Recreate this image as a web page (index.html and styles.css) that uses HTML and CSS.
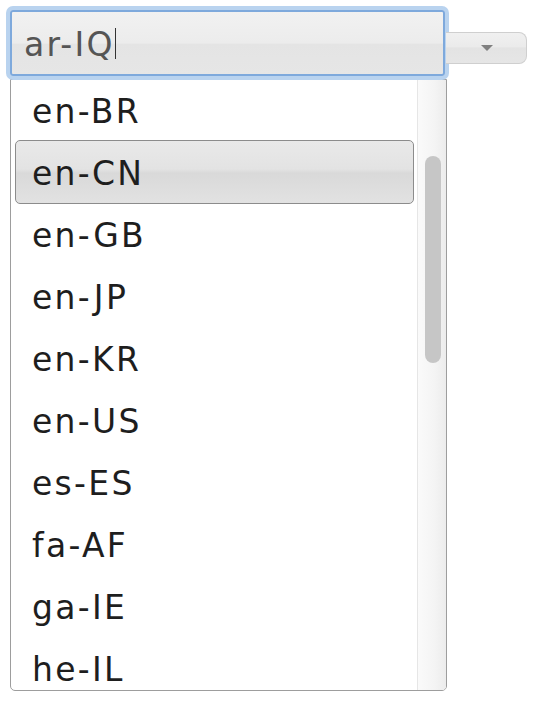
FILE: index.html
```html
<!DOCTYPE html>
<html>
<head>
<meta charset="utf-8">
<link rel="stylesheet" href="styles.css">
</head>
<body>
<div class="combo">
  <div class="row">
    <div class="input"><span class="value">ar-IQ</span><span class="caret"></span></div>
    <div class="button"><span class="arrow"></span></div>
  </div>
  <div class="dropdown">
    <ul class="list">
      <li class="item">en-BR</li>
      <li class="item selected">en-CN</li>
      <li class="item">en-GB</li>
      <li class="item">en-JP</li>
      <li class="item">en-KR</li>
      <li class="item">en-US</li>
      <li class="item">es-ES</li>
      <li class="item">fa-AF</li>
      <li class="item">ga-IE</li>
      <li class="item">he-IL</li>
    </ul>
    <div class="scrollbar"><div class="thumb"></div></div>
  </div>
</div>
</body>
</html>
```
FILE: styles.css
```css
html, body {
  margin: 0;
  padding: 0;
  background: #fff;
}
body {
  padding: 10px;
  font-family: "DejaVu Sans", Verdana, sans-serif;
}
.combo {
  width: 517px;
}
.row {
  display: flex;
  align-items: flex-start;
  position: relative;
  z-index: 2;
}
.input {
  box-sizing: border-box;
  width: 436px;
  height: 66px;
  border: 2px solid #7ea9dc;
  border-radius: 3px;
  box-shadow: 0 0 0 4px #b9d3ef;
  background: linear-gradient(#f1f1f1 0%, #ececec 50%, #e4e4e4 52%, #e6e6e6 100%);
  display: flex;
  align-items: center;
  padding-left: 12px;
  padding-top: 3px;
  font-size: 33px;
  color: #555;
  letter-spacing: 2.3px;
}
.caret {
  display: inline-block;
  width: 1.5px;
  height: 31px;
  background: #333;
  margin-left: 0;
  margin-top: -2px;
}
.button {
  box-sizing: border-box;
  width: 81px;
  height: 32px;
  margin-left: 1px;
  margin-top: 22px;
  border: 1px solid #cfcfcf;
  border-left: none;
  border-radius: 0 8px 8px 0;
  background: linear-gradient(#f0f0f0 0%, #ebebeb 45%, #e3e3e3 50%, #e6e6e6 100%);
  display: flex;
  align-items: center;
  justify-content: center;
}
.arrow {
  width: 0;
  height: 0;
  border-left: 6px solid transparent;
  border-right: 6px solid transparent;
  border-top: 6px solid #808080;
  margin-left: 2px;
}
.dropdown {
  box-sizing: border-box;
  width: 437px;
  height: 612px;
  margin-top: 3px;
  border: 1px solid #9d9d9d;
  border-radius: 0 0 5px 5px;
  display: flex;
  overflow: hidden;
  background: #fff;
  position: relative;
  z-index: 1;
}
.list {
  list-style: none;
  margin: -1px 0 0 0;
  padding: 0 3px 0 4px;
  flex: 1;
}
.item {
  box-sizing: border-box;
  height: 62px;
  display: flex;
  align-items: center;
  padding-left: 17px;
  padding-top: 3px;
  font-size: 33px;
  color: #1e1e1e;
  letter-spacing: 2.3px;
}
.item.selected {
  height: 64px;
  margin: -1px 0;
  padding-left: 16px;
  border: 1px solid #8c8c8c;
  border-radius: 5px;
  background: linear-gradient(#e9e9e9 0%, #e3e3e3 45%, #d9d9d9 52%, #e2e2e2 100%);
}
.scrollbar {
  box-sizing: border-box;
  width: 29px;
  border-left: 1px solid #e6e6e6;
  background: linear-gradient(90deg, #fafafa 0%, #f4f4f4 60%, #ececec 100%);
  padding: 76px 5px 0 7px;
}
.thumb {
  width: 16px;
  height: 207px;
  border-radius: 8px;
  background: #c6c6c6;
}
```
